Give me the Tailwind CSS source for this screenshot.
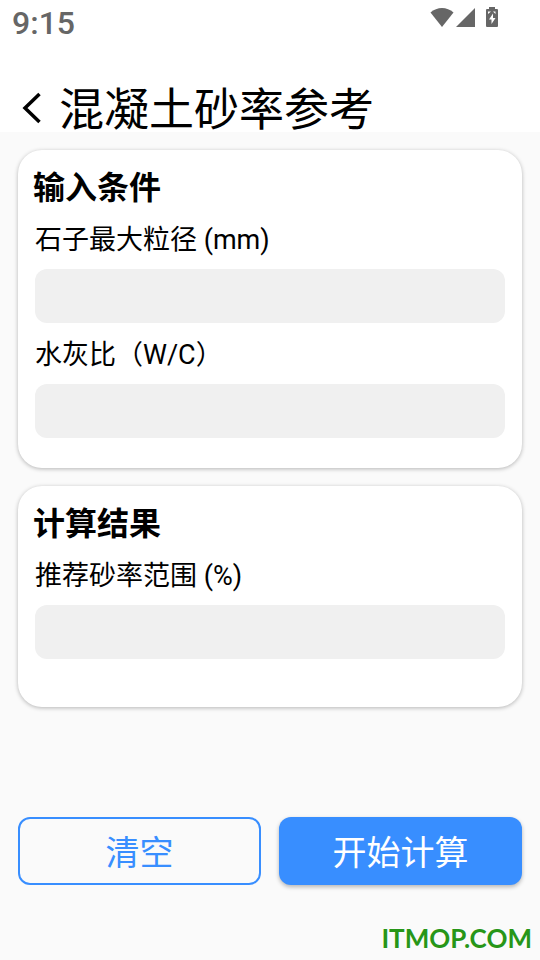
<!DOCTYPE html>
<html lang="zh-CN">
<head>
    <meta charset="UTF-8"/>
    <meta name="viewport" content="width=device-width, initial-scale=1.0"/>
    <script src="https://cdn.jsdelivr.net/npm/@tailwindcss/browser@4"></script>
    <title>混凝土砂率参考</title>
</head>
<body class="min-h-screen flex flex-col bg-[#fafafa] text-black font-[Roboto,'Noto_Sans_CJK_SC',sans-serif]">
<header class="bg-white">
    <!-- Status bar -->
    <div class="h-[46px] flex justify-between items-center pl-3 pr-[42px] text-[#666]">
        <span class="text-[32px] leading-[46px] font-medium">9:15</span>
        <div class="flex items-center gap-[2px] mb-3">
            <svg class="w-6 h-5" viewBox="0 0 24 20" fill="currentColor">
                <path d="M12 20 .5 5.500C7-.5 17-.5 23.500 5.500z"/>
            </svg>
            <svg class="w-5 h-5" viewBox="0 0 20 20" fill="currentColor">
                <path d="M0 20 19 1v19z"/>
            </svg>
            <svg class="w-3 h-5 ml-2" viewBox="0 0 12 20" fill="currentColor">
                <path fill-rule="evenodd"
                      d="M3 0h6v2h2q1 0 1 1v16q0 1-1 1H1q-1 0-1-1V3q0-1 1-1h2zM7 6.500 3 12.500h2.500v4.500L9.500 11H7zM2 4.500v2.500l3-2.500zm5 0h2.500v2.500z"/>
            </svg>
        </div>
    </div>
    <!-- Title -->
    <div class="h-[86px] flex items-end pl-5">
        <button type="button" aria-label="返回" class="w-[39px] mb-2 cursor-pointer">
            <svg class="w-6 h-8" viewBox="0 0 24 32" fill="none" stroke="currentColor" stroke-width="3.5">
                <path d="M19.500 2 5 16l14.500 14"/>
            </svg>
        </button>
        <h1 class="text-[45px] leading-[42px]">混凝土砂率参考</h1>
    </div>
</header>
<main class="flex flex-col gap-[18px] p-[18px]">
    <section class="bg-white rounded-3xl px-[17px] pt-4 pb-[30px] shadow-[0_1px_4px_rgba(0,0,0,0.28)]">
        <h2 class="-ml-0.5 text-[32px] leading-[44px] font-bold">输入条件</h2>
        <label for="size" class="block mt-3 mb-[11px] text-[27px] leading-9">石子最大粒径 (mm)</label>
        <input id="size" type="text" inputmode="decimal"
               class="block w-full h-[54px] px-3 text-[27px] bg-[#f0f0f0] rounded-xl outline-0"/>
        <label for="ratio" class="block mt-[14px] mb-[11px] text-[27px] leading-9">水灰比（W/C）</label>
        <input id="ratio" type="text" inputmode="decimal"
               class="block w-full h-[54px] px-3 text-[27px] bg-[#f0f0f0] rounded-xl outline-0"/>
    </section>
    <section class="bg-white rounded-3xl px-[17px] pt-4 pb-12 shadow-[0_1px_4px_rgba(0,0,0,0.28)]">
        <h2 class="-ml-0.5 text-[32px] leading-[44px] font-bold">计算结果</h2>
        <label for="result" class="block mt-3 mb-[11px] text-[27px] leading-9">推荐砂率范围 (%)</label>
        <input id="result" type="text" readonly
               class="block w-full h-[54px] px-3 text-[27px] bg-[#f0f0f0] rounded-xl outline-0"/>
    </section>
    <div class="grid grid-cols-2 gap-[18px] mt-[92px] text-[34px]">
        <button type="button" class="h-[68px] pt-1 border-2 border-[#388eff] text-[#388eff] rounded-xl cursor-pointer">清空</button>
        <button type="button" class="h-[68px] pt-1 bg-[#388eff] text-white rounded-xl shadow-[0_2px_4px_rgba(0,0,0,0.28)] cursor-pointer">开始计算</button>
    </div>
</main>
<footer class="mt-auto pr-2 pb-1 text-right">
    <span class="font-[Lato,sans-serif] font-bold text-[26px] leading-9 text-[#279618] [text-shadow:0_0_3px_white]">ITMOP.COM</span>
</footer>
</body>
</html>
